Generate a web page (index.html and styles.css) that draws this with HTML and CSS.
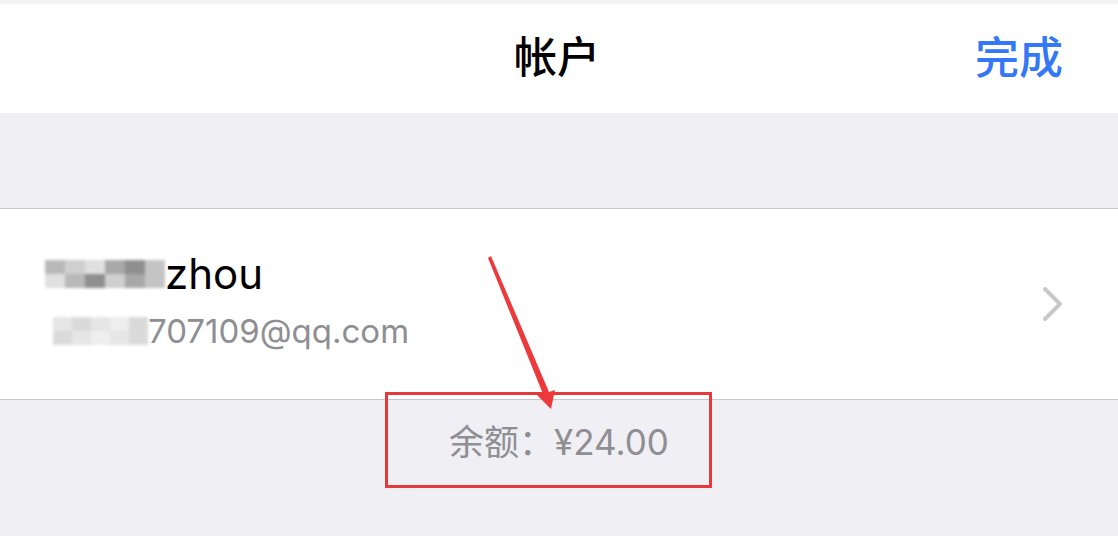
FILE: index.html
```html
<!DOCTYPE html>
<html lang="zh-CN">
<head>
<meta charset="utf-8">
<title>帐户</title>
<link rel="stylesheet" href="styles.css">
</head>
<body>
<div class="screen">
  <div class="status-strip"></div>
  <header class="nav">
    <div class="nav-side"></div>
    <h1 class="nav-title">帐户</h1>
    <div class="nav-side nav-right"><span class="nav-done">完成</span></div>
  </header>
  <div class="gap"></div>
  <section class="cell">
    <div class="cell-text">
      <div class="name-line">
        <span class="mosaic mosaic-name">
          <i class="m1"></i><i class="m2"></i><i class="m3"></i><i class="m4"></i><i class="m5"></i><i class="m6"></i>
          <i class="m3"></i><i class="m1"></i><i class="m5"></i><i class="m2"></i><i class="m4"></i><i class="m6"></i>
        </span><span class="name">zhou</span>
      </div>
      <div class="mail-line">
        <span class="mosaic mosaic-mail">
          <i class="e1"></i><i class="e2"></i><i class="e1"></i><i class="e3"></i><i class="e2"></i>
          <i class="e2"></i><i class="e1"></i><i class="e3"></i><i class="e1"></i><i class="e2"></i>
        </span><span class="mail">707109@qq.com</span>
      </div>
    </div>
    <svg class="chevron" width="22" height="36" viewBox="0 0 22 36"><path d="M3 3 L18 18 L3 33" fill="none" stroke="#c7c7cc" stroke-width="4" stroke-linecap="round" stroke-linejoin="round"/></svg>
  </section>
  <div class="footer">
    <p class="balance">余额：¥24.00</p>
  </div>
  <div class="mark-box"></div>
  <svg class="mark-arrow" width="1118" height="536" viewBox="0 0 1118 536">
    <polygon points="488,258 491,256 549,392 555,390 551,409 537,395 543,394" fill="#ec3a3c"/>
  </svg>
</div>
</body>
</html>
```

FILE: styles.css
```css
html, body {
  margin: 0;
  padding: 0;
}
body {
  background: #efeff4;
  font-family: Inter, "Noto Sans CJK SC", sans-serif;
  width: 1118px;
  height: 536px;
  overflow: hidden;
}
.screen {
  position: relative;
  width: 1118px;
  height: 536px;
}
.status-strip {
  height: 4px;
  background: #f4f4f6;
}
.nav {
  height: 109px;
  background: #ffffff;
  display: grid;
  grid-template-columns: 1fr auto 1fr;
  align-items: center;
}
.nav-title {
  margin: 0;
  font-family: "Noto Sans CJK SC", sans-serif;
  font-size: 43px;
  font-weight: 500;
  line-height: 1;
  color: #000;
  padding-bottom: 8px;
  padding-right: 4px;
}
.nav-right {
  display: flex;
  justify-content: flex-end;
  padding-right: 55px;
}
.nav-done {
  font-family: "Noto Sans CJK SC", sans-serif;
  font-size: 44px;
  font-weight: 500;
  line-height: 1;
  color: #3478f6;
  padding-bottom: 8px;
}
.gap {
  height: 95px;
}
.cell {
  height: 190px;
  background: #fff;
  border-top: 1px solid #c8c7cc;
  border-bottom: 1px solid #c8c7cc;
  display: flex;
  align-items: center;
  justify-content: space-between;
  padding: 0 54px 0 45px;
}
.cell-text {
  display: flex;
  flex-direction: column;
  gap: 10px;
  padding-bottom: 8px;
}
.name-line {
  display: flex;
  align-items: center;
  height: 52px;
}
.name {
  font-size: 42px;
  color: #000;
  line-height: 1;
  margin-left: 0;
}
.mail-line {
  display: flex;
  align-items: center;
  height: 42px;
  margin-left: 8px;
}
.mail {
  font-size: 33px;
  color: #8e8e93;
  line-height: 1;
}
.mosaic {
  display: grid;
  filter: blur(1.5px);
}
.mosaic i {
  display: block;
}
.mosaic-name {
  grid-template-columns: repeat(6, 20px);
  grid-template-rows: repeat(2, 14px);
  width: 120px;
}
.mosaic-mail {
  grid-template-columns: repeat(5, 19px);
  grid-template-rows: repeat(2, 14px);
  width: 95px;
}
.m1 { background: #b9b9b9; }
.m2 { background: #cfcfcf; }
.m3 { background: #e0e0e0; }
.m4 { background: #a8a8a8; }
.m5 { background: #8f8f8f; }
.m6 { background: #c4c4c4; }
.e1 { background: #e6e6e6; }
.e2 { background: #dadada; }
.e3 { background: #eeeeee; }
.chevron {
  display: block;
}
.footer {
  display: flex;
  justify-content: center;
  padding-top: 21px;
}
.balance {
  margin: 0;
  font-family: Inter, "Noto Sans CJK SC", sans-serif;
  font-size: 35px;
  color: #8e8e93;
  line-height: 1.2;
}
.mark-box {
  position: absolute;
  left: 385px;
  top: 392px;
  width: 321px;
  height: 90px;
  border: 3px solid #e53a3d;
}
.mark-arrow {
  position: absolute;
  left: 0;
  top: 0;
  pointer-events: none;
}
```
